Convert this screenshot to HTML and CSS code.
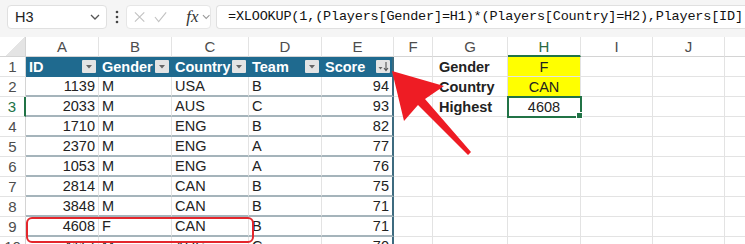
FILE: index.html
```html
<!DOCTYPE html>
<html>
<head>
  <title>Players lookup</title>
  <link rel="stylesheet" href="styles.css">
</head>
<body>
  <div class="app">
    <!-- Formula bar -->
    <div class="toolbar">
      <div class="namebox">
        <span>H3</span>
        <svg width="10" height="6" viewBox="0 0 10 6"><path d="M1 1l4 4 4-4" fill="none" stroke="#555" stroke-width="1.3"/></svg>
      </div>
      <svg class="dots" width="4" height="16" viewBox="0 0 4 16"><circle cx="2" cy="3" r="1.3"/><circle cx="2" cy="8" r="1.3"/><circle cx="2" cy="13" r="1.3"/></svg>
      <div class="fxbox">
        <svg width="12" height="12" viewBox="0 0 12 12"><path d="M1 1l10 10M11 1L1 11" stroke="#c2c2c2" stroke-width="1.2"/></svg>
        <svg width="14" height="12" viewBox="0 0 14 12"><path d="M1 6l4 5 8-10" fill="none" stroke="#c2c2c2" stroke-width="1.2"/></svg>
        <span class="fx">fx</span>
        <svg width="9" height="6" viewBox="0 0 9 6"><path d="M1 1l3.5 3.5L8 1" fill="none" stroke="#999" stroke-width="1.1"/></svg>
      </div>
      <div class="formula">=XLOOKUP(1,(Players[Gender]=H1)*(Players[Country]=H2),Players[ID])</div>
    </div>

    <!-- Grid -->
    <div class="sheet" id="sheet"></div>

    <!-- Callout arrow -->
    <svg class="callout" width="745" height="244" viewBox="0 0 745 244">
      <polygon points="392,71 444,86 425,99 471,152 468,155 418,105 404,121" fill="#ee1c24"/>
    </svg>
  </div>

  <script>
    const sheet = document.getElementById('sheet');
    const letters = ['A', 'B', 'C', 'D', 'E', 'F', 'G', 'H', 'I', 'J', 'K'];
    const players = [
      ['ID', 'Gender', 'Country', 'Team', 'Score'],
      [1139, 'M', 'USA', 'B', 94],
      [2033, 'M', 'AUS', 'C', 93],
      [1710, 'M', 'ENG', 'B', 82],
      [2370, 'M', 'ENG', 'A', 77],
      [1053, 'M', 'ENG', 'A', 76],
      [2814, 'M', 'CAN', 'B', 75],
      [3848, 'M', 'CAN', 'B', 71],
      [4608, 'F', 'CAN', 'B', 71],
      [4117, 'M', 'AUS', 'C', 70]
    ];
    const lookup = { 1: ['Gender', 'F'], 2: ['Country', 'CAN'], 3: ['Highest', '4608'] };

    function cell(text, cls) {
      const d = document.createElement('div');
      d.className = 'cell ' + (cls || '');
      if (text !== undefined) d.textContent = text;
      sheet.appendChild(d);
      return d;
    }

    cell('', 'corner');
    letters.forEach(l => cell(l, 'col-head' + (l === 'H' ? ' active' : '')));

    players.forEach((row, i) => {
      const r = i + 1;
      cell(r, 'row-head' + (r === 3 ? ' active' : ''));

      row.forEach((v, c) => {
        if (r === 1) {
          const th = cell(undefined, 'th' + (c === 4 ? ' end' : ''));
          const label = document.createElement('span');
          label.textContent = v;
          const btn = document.createElement('span');
          btn.className = 'filter' + (c === 4 ? ' sorted' : '');
          th.append(label, btn);
        } else {
          let cls = 'tbl';
          if (typeof v === 'number') cls += ' num';
          if (c === 4) cls += ' end';
          if (r === 9 && c === 0) cls += ' ring';
          cell(v, cls);
        }
      });

      cell('');
      if (lookup[r]) {
        cell(lookup[r][0], 'label');
        cell(lookup[r][1], r === 3 ? 'center sel' : 'center yellow');
      } else {
        cell('');
        cell('');
      }
      cell('');
      cell('');
      cell('');
    });
  </script>
</body>
</html>
```

FILE: styles.css
```css
* {
  box-sizing: border-box;
}

body {
  margin: 0;
  overflow: hidden;
  background: #fff;
  font-family: "Liberation Sans", Arial, sans-serif;
  color: #222;
}

.app {
  position: relative;
  width: 745px;
  height: 244px;
  overflow: hidden;
}

/* formula bar */
.toolbar {
  height: 37px;
  background: #f5f5f5;
  display: flex;
  align-items: flex-start;
  padding: 5px 0 0 7px;
}

.namebox {
  width: 100px;
  height: 24px;
  background: #fff;
  border: 1px solid #e0e0e0;
  border-radius: 4px;
  display: flex;
  align-items: center;
  justify-content: space-between;
  padding: 0 6px 0 7px;
  font-size: 14.5px;
}

.dots {
  margin: 4px 7px 0 8px;
  fill: #444;
}

.fxbox {
  width: 85px;
  height: 24px;
  background: #fff;
  border: 1px solid #e6e6e6;
  border-radius: 4px;
  display: flex;
  align-items: center;
  gap: 9px;
  padding-left: 7px;
}

.fx {
  font-family: "Liberation Serif", serif;
  font-style: italic;
  font-size: 17px;
  color: #333;
  margin-left: 10px;
  margin-right: -6px;
}

.formula {
  flex: 1;
  margin-left: 5px;
  height: 24px;
  background: #fff;
  border: 1px solid #e0e0e0;
  border-right: none;
  border-radius: 4px 0 0 4px;
  padding-left: 11px;
  font-family: "Liberation Mono", monospace;
  font-size: 13.5px;
  letter-spacing: -0.18px;
  line-height: 22px;
  white-space: nowrap;
  overflow: hidden;
  color: #111;
}

/* sheet */
.sheet {
  display: grid;
  grid-template-columns: 26px 73px 73px 77px 73px 72px 39px 75px 73px 72px 72px 72px;
  grid-auto-rows: 20px;
}

.cell {
  display: flex;
  align-items: center;
  padding: 0 3px;
  border-right: 1px solid #e3e3e3;
  border-bottom: 1px solid #e3e3e3;
  font-size: 14.5px;
  white-space: nowrap;
}

.corner {
  background: linear-gradient(135deg, #fff 55%, #e4e4e4 55%);
  border-right-color: #d4d4d4;
  border-bottom-color: #d4d4d4;
}

.col-head {
  justify-content: center;
  color: #4d4d4d;
  font-size: 15px;
  border-bottom-color: #d4d4d4;
}

.col-head.active {
  border-bottom: 2px solid #217346;
  color: #2a6a42;
}

.row-head {
  justify-content: center;
  color: #4d4d4d;
  font-size: 15px;
  border-right-color: #d4d4d4;
}

.row-head.active {
  border-right: 2px solid #217346;
  color: #217346;
}

.th {
  background: #1f6a8f;
  color: #fff;
  font-weight: bold;
  justify-content: space-between;
  border-right-color: #1f6a8f;
  border-bottom-color: #1f6a8f;
  padding-right: 2px;
}

.filter {
  width: 14px;
  height: 13px;
  background: #e4e4e4 url("data:image/svg+xml,%3Csvg xmlns='http://www.w3.org/2000/svg' width='14' height='13'%3E%3Cpath d='M4 5h6l-3 3.5z' fill='%23666'/%3E%3C/svg%3E") no-repeat;
  border-radius: 1px;
}

.filter.sorted {
  background-image: url("data:image/svg+xml,%3Csvg xmlns='http://www.w3.org/2000/svg' width='14' height='13'%3E%3Cpath d='M2.5 7h4l-2 2.5z' fill='%23666'/%3E%3Cpath d='M10 2v8M8 8l2 2.5L12 8' fill='none' stroke='%23555' stroke-width='1.1'/%3E%3C/svg%3E");
}

.tbl {
  border-bottom: 2px solid #a5b4bb;
}

.end {
  border-right: 2px solid #3d6b7f;
}

.num {
  justify-content: flex-end;
}

.label {
  font-weight: bold;
  padding-left: 6px;
}

.center {
  justify-content: center;
}

.yellow {
  background: #ffff00;
}

.sel {
  position: relative;
  outline: 2px solid #217346;
  outline-offset: -1px;
}

.sel::after {
  content: "";
  position: absolute;
  right: -3px;
  bottom: -3px;
  width: 5px;
  height: 5px;
  background: #217346;
  border: 1px solid #fff;
}

.ring {
  position: relative;
}

.ring::after {
  content: "";
  position: absolute;
  left: 0;
  top: 0;
  width: 224px;
  height: 22px;
  border: 2px solid #e3262c;
  border-radius: 6px;
}

.callout {
  position: absolute;
  left: 0;
  top: 0;
  pointer-events: none;
}
```
